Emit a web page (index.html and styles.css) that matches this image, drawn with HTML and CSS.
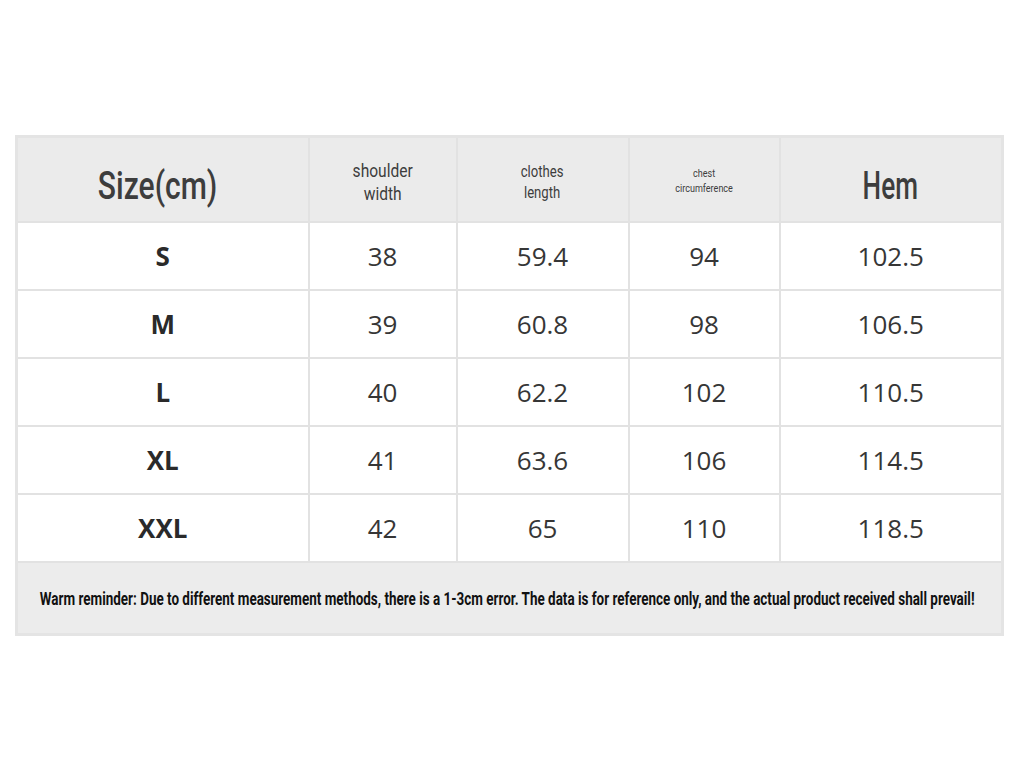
FILE: index.html
```html
<!DOCTYPE html>
<html>
<head>
<meta charset="utf-8">
<link rel="stylesheet" href="styles.css">
</head>
<body>
<div class="page">
  <table class="chart">
    <colgroup>
      <col class="c1"><col class="c2"><col class="c3"><col class="c4"><col class="c5">
    </colgroup>
    <thead>
      <tr class="head">
        <th><div class="cell"><span class="cond big size-h">Size(cm)</span></div></th>
        <th><div class="cell"><span class="cond mid">shoulder<br>width</span></div></th>
        <th><div class="cell"><span class="cond sm">clothes<br>length</span></div></th>
        <th><div class="cell"><span class="cond xs">chest<br>circumference</span></div></th>
        <th><div class="cell"><span class="cond big hem-h">Hem</span></div></th>
      </tr>
    </thead>
    <tbody>
      <tr><td class="size"><span class="val">S</span></td><td><span class="val">38</span></td><td><span class="val">59.4</span></td><td><span class="val">94</span></td><td><span class="val">102.5</span></td></tr>
      <tr><td class="size"><span class="val">M</span></td><td><span class="val">39</span></td><td><span class="val">60.8</span></td><td><span class="val">98</span></td><td><span class="val">106.5</span></td></tr>
      <tr><td class="size"><span class="val">L</span></td><td><span class="val">40</span></td><td><span class="val">62.2</span></td><td><span class="val">102</span></td><td><span class="val">110.5</span></td></tr>
      <tr><td class="size"><span class="val">XL</span></td><td><span class="val">41</span></td><td><span class="val">63.6</span></td><td><span class="val">106</span></td><td><span class="val">114.5</span></td></tr>
      <tr><td class="size"><span class="val">XXL</span></td><td><span class="val">42</span></td><td><span class="val">65</span></td><td><span class="val">110</span></td><td><span class="val">118.5</span></td></tr>
    </tbody>
    <tfoot>
      <tr class="foot">
        <td colspan="5"><div class="cell"><span class="cond note">Warm reminder: Due to different measurement methods, there is a 1-3cm error. The data is for reference only, and the actual product received shall prevail!</span></div></td>
      </tr>
    </tfoot>
  </table>
</div>
</body>
</html>
```

FILE: styles.css
```css
html, body {
  margin: 0;
  padding: 0;
  background: #ffffff;
}
.page {
  padding: 135px 0 0 15px;
  width: 1024px;
  height: 768px;
  box-sizing: border-box;
}
.chart {
  border-collapse: collapse;
  table-layout: fixed;
  width: 986px;
  border: 3px solid #e4e4e4;
}
.c1 { width: 292px; }
.c2 { width: 148px; }
.c3 { width: 172px; }
.c4 { width: 151px; }
.c5 { width: 223px; }
.chart th, .chart td {
  border: 2px solid #e2e2e2;
  text-align: center;
  vertical-align: middle;
  padding: 0;
}
.cell {
  display: flex;
  justify-content: center;
  align-items: center;
  white-space: nowrap;
}
.cond {
  display: inline-block;
  font-family: "Roboto", "Liberation Sans", sans-serif;
  transform: scaleX(0.8);
  transform-origin: center;
}
.head th {
  height: 83px;
  background: #ebebeb;
  color: #3d3d3d;
  font-weight: normal;
}
.cond.big {
  font-size: 39px;
  font-weight: 500;
  margin-top: 12px;
}
.cond.size-h { transform: scaleX(0.77); margin-right: 10px; }
.cond.hem-h { transform: scaleX(0.67); }
.cond.mid { font-size: 19px; line-height: 23px; margin-top: 4px; transform: scaleX(0.82); }
.cond.sm { font-size: 16px; line-height: 21px; margin-top: 4px; transform: scaleX(0.82); }
.cond.xs { font-size: 11px; line-height: 15px; margin-top: 2px; transform: scaleX(0.82); }
tbody td {
  height: 66px;
  background: #ffffff;
  color: #363636;
  font-family: "Open Sans", "Noto Sans", sans-serif;
  font-size: 26px;
  line-height: 30px;
}
.val {
  display: inline-block;
  margin-top: -6px;
}
tbody td.size {
  font-weight: bold;
  color: #2a2a2a;
  font-size: 26px;
}
.foot td {
  height: 70px;
  background: #ececec;
  color: #111111;
}
.cond.note {
  font-size: 19px;
  font-weight: 700;
  transform: scaleX(0.708);
  margin-right: 4px;
}
```
